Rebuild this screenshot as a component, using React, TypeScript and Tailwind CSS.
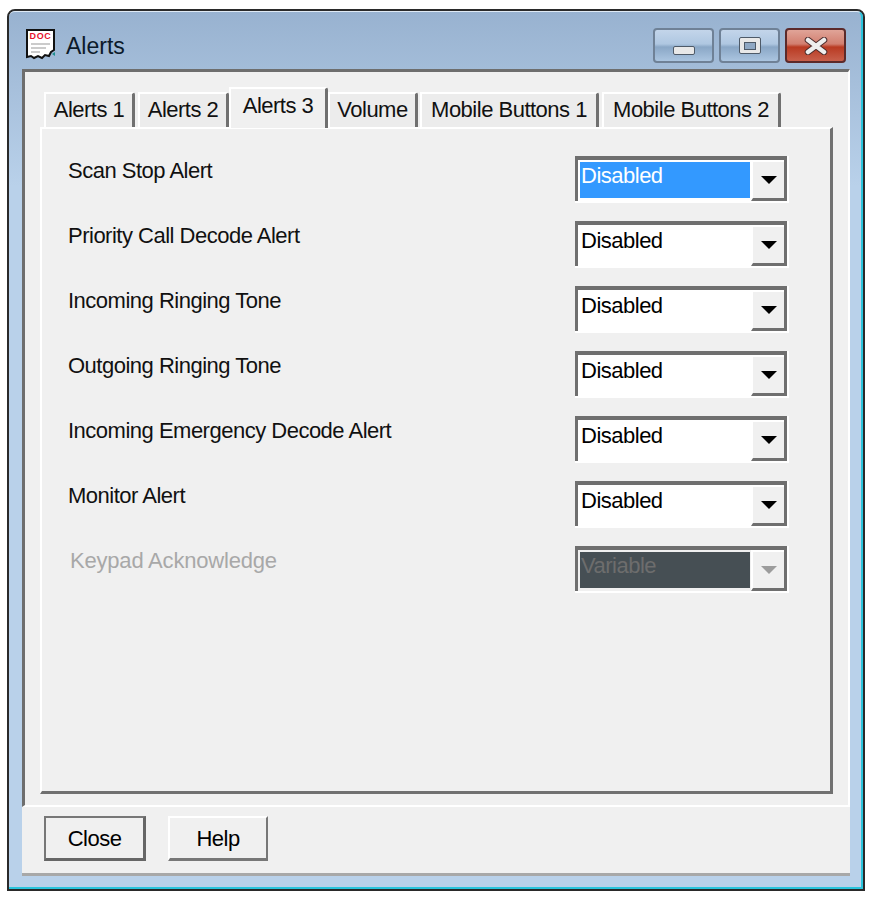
const rows = [
  { label: 'Scan Stop Alert', value: 'Disabled', selected: true },
  { label: 'Priority Call Decode Alert', value: 'Disabled' },
  { label: 'Incoming Ringing Tone', value: 'Disabled' },
  { label: 'Outgoing Ringing Tone', value: 'Disabled' },
  { label: 'Incoming Emergency Decode Alert', value: 'Disabled' },
  { label: 'Monitor Alert', value: 'Disabled' },
  { label: 'Keypad Acknowledge', value: 'Variable', disabled: true },
]

const tabs = [
  { name: 'Alerts 1', width: 'w-[91px]', margin: 'ml-[4px]' },
  { name: 'Alerts 2', width: 'w-[91px]', margin: 'ml-[3px]' },
  { name: 'Alerts 3', width: 'w-[99px]', margin: 'ml-0', active: true },
  { name: 'Volume', width: 'w-[90px]', margin: 'ml-0' },
  { name: 'Mobile Buttons 1', width: 'w-[179px]', margin: 'ml-[2px]' },
  { name: 'Mobile Buttons 2', width: 'w-[179px]', margin: 'ml-[3px]' },
]

function DocIcon() {
  return (
    <svg width="34" height="34" viewBox="0 0 34 34" className="shrink-0">
      <path d="M3 3 H30 V23 L27 25 L25 29 L21 28 L18 31 L14 29 L10 31 L7 29 L3 30 Z" fill="#fff" stroke="#111" strokeWidth="2" />
      <text x="16.5" y="12" textAnchor="middle" fontSize="9" fontWeight="700" fill="#e8112d" letterSpacing="0.6">DOC</text>
      <path d="M7 17 H26 M7 21 H22 M7 25 H16" stroke="#bbb" strokeWidth="1.5" />
      <path d="M28 27 L31 25 V29 Z" fill="#1f8f8f" />
    </svg>
  )
}

function CaptionButton({ kind }: { kind: 'min' | 'max' | 'close' }) {
  const bg =
    kind === 'close'
      ? 'bg-[linear-gradient(to_bottom,#e0a498_0%,#d27f70_45%,#b93a22_55%,#c8604c_100%)] border-[#5c2a2a]'
      : 'bg-[linear-gradient(to_bottom,#c3d5ea_0%,#afc7e1_45%,#8aa7c6_55%,#abc5e0_100%)] border-[#6f8196]'
  return (
    <div className={`w-[61px] h-[35px] rounded-[4px] border-2 flex items-center justify-center ${bg}`}>
      {kind === 'min' && <div className="mt-[10px] w-[22px] h-[9px] rounded-[2px] bg-[#e8e8e8] border border-[#4e5a68]" />}
      {kind === 'max' && (
        <div className="w-[22px] h-[17px] rounded-[2px] bg-[#e8e8e8] border border-[#4e5a68] flex items-center justify-center">
          <div className="w-[12px] h-[8px] bg-[#8fa8c4] border border-[#4e5a68]" />
        </div>
      )}
      {kind === 'close' && (
        <svg width="24" height="18" viewBox="0 0 24 18">
          <path d="M4 3 L20 15 M20 3 L4 15" stroke="#4a2a2a" strokeWidth="6.5" strokeLinecap="round" />
          <path d="M4 3 L20 15 M20 3 L4 15" stroke="#eeeeee" strokeWidth="4.5" strokeLinecap="round" />
        </svg>
      )}
    </div>
  )
}

function Combo({ value, selected, disabled }: { value: string; selected?: boolean; disabled?: boolean }) {
  const box = disabled ? 'bg-[#464f54] text-[#6d6d6d]' : selected ? 'bg-[#3399ff] text-white' : 'bg-white text-black'
  return (
    <div className="w-[214px] h-[47px] border-r-2 border-b-2 border-white">
      <div className={`h-full flex border-t-[4px] border-l-[3px] border-r-[3px] border-[#6f6f6f] ${disabled ? 'bg-[#f0f0f0]' : 'bg-white'}`}>
        <div className="flex-1 pl-[2px] pt-[2px] pr-[1px] pb-[3px]">
          <div className={`h-[36px] pl-[1px] leading-[28px] ${box}`}>{value}</div>
        </div>
        <div className="w-[33px] bg-[#f0f0f0] border-l-2 border-t-2 border-white border-b-[3px] border-b-[#6f6f6f] flex items-center justify-center">
          <div className={`w-0 h-0 border-l-[8px] border-r-[8px] border-t-[8px] border-l-transparent border-r-transparent ${disabled ? 'border-t-[#9c9c9c]' : 'border-t-black'}`} />
        </div>
      </div>
    </div>
  )
}

export default function App() {
  return (
    <div className="w-[874px] h-[898px] bg-white pl-[7px] pt-[9px] text-[22px] tracking-[-0.5px] text-[#111] font-['Liberation_Sans',sans-serif] overflow-hidden">
      <div className="w-[858px] h-[882px] rounded-t-[8px] border-2 border-[#2a2a2a] bg-[linear-gradient(to_bottom,#98b2d0_0%,#b9d1ea_20%,#b9d1ea_100%)]">
        <div className="h-full flex flex-col rounded-t-[6px] border-t border-t-[#dfeaf5] border-r-2 border-b-2 border-r-[#29c4dc] border-b-[#29c4dc]">
          {/* Titelbalk */}
          <div className="h-[57px] shrink-0 flex items-start pl-[15px] pr-[15px] pt-[16px]">
            <div className="flex items-center gap-[8px] -mt-[2px] h-[36px]">
              <DocIcon />
              <span className="text-[23px] tracking-normal text-[#0c1a2a] mt-[5px]">Alerts</span>
            </div>
            <div className="ml-auto flex gap-[5px]">
              <CaptionButton kind="min" />
              <CaptionButton kind="max" />
              <CaptionButton kind="close" />
            </div>
          </div>

          <div className="ml-[13px] w-[828px] flex flex-col">
            <div className="h-[738px] bg-[#f0f0f0] border-t-[3px] border-l-[3px] border-[#6e6e6e] border-r-2 border-r-white border-b-2 border-b-white pl-[15px] pt-[15px]">
              {/* Tabs */}
              <div className="h-[41px] flex items-end relative z-10 -mb-[1px]">
                {tabs.map(tab => (
                  <div
                    key={tab.name}
                    className={`${tab.width} ${tab.margin} ${tab.active ? 'h-[41px] pt-[3px] bg-[#f0f0f0]' : 'h-[35px] pt-[2px] bg-[#ececec] mb-[1px]'} border-t-2 border-l-2 border-t-white border-l-white border-r-[3px] border-r-[#707070] rounded-tr-[3px] text-center leading-[27px]`}
                  >
                    {tab.name}
                  </div>
                ))}
              </div>

              {/* Panel */}
              <div className="w-[793px] h-[667px] border-t-2 border-l-2 border-t-white border-l-white border-r-[3px] border-b-[3px] border-r-[#707070] border-b-[#707070] pt-[27px] pl-[26px]">
                {rows.map(row => (
                  <div key={row.label} className="h-[65px] flex items-start justify-between pr-[41px]">
                    <span className={`-mt-[2px] ${row.disabled ? 'text-[#a8a8a8] ml-[2px] tracking-[-0.2px]' : ''}`}>{row.label}</span>
                    <Combo value={row.value} selected={row.selected} disabled={row.disabled} />
                  </div>
                ))}
              </div>
            </div>

            {/* Onderbalk */}
            <div className="h-[69px] bg-[#f0f0f0] border-b-[3px] border-b-[#a8a8a8] pl-[22px] pt-[9px] flex gap-[22px] items-start">
              <div className="w-[102px] h-[45px] border-2 border-[#777] border-r-[3px] border-b-[3px] border-r-[#666] border-b-[#666] flex items-center justify-center text-black">
                Close
              </div>
              <div className="w-[100px] h-[45px] border-t-2 border-l-2 border-t-white border-l-white border-r-2 border-b-[3px] border-r-[#777] border-b-[#777] flex items-center justify-center text-black">
                Help
              </div>
            </div>
          </div>
        </div>
      </div>
    </div>
  )
}
